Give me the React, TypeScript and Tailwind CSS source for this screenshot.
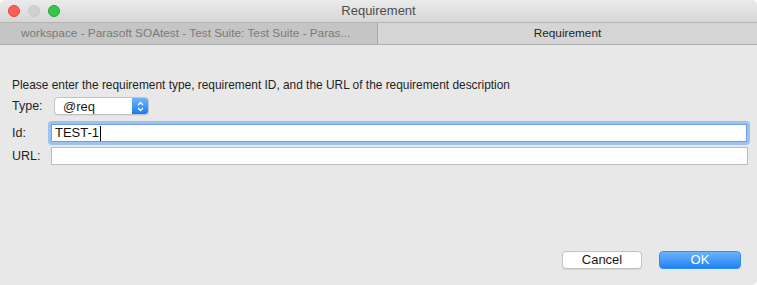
import React from 'react';

// macOS-style "Requirement" dialog sheet

function TrafficLights() {
  return (
    <div className="absolute left-[8px] top-[5px] flex gap-[8px]">
      <span className="h-[12px] w-[12px] rounded-full border border-[#e0443e] bg-[#fc605b]" />
      <span className="h-[12px] w-[12px] rounded-full border border-[#c8c8c8] bg-[#d0d0d0]" />
      <span className="h-[12px] w-[12px] rounded-full border border-[#1aab29] bg-[#34c84a]" />
    </div>
  );
}

function Row({ label, className, children }: { label: string; className?: string; children: React.ReactNode }) {
  return (
    <div className={`flex items-center ${className ?? ''}`}>
      <span className="w-[38px] shrink-0 text-[12.5px] leading-[18px] text-[#1f1f1f]">{label}</span>
      {children}
    </div>
  );
}

export default function App() {
  return (
    <div className="h-[285px] w-[757px] bg-white" style={{ fontFamily: '"Liberation Sans", Arial, sans-serif' }}>
      <div className="flex h-full flex-col overflow-hidden rounded-t-[5px] rounded-br-[5px] bg-[#e8e8e8]">
        {/* title bar */}
        <div className="relative flex h-[23px] shrink-0 items-center justify-center border-b border-[#b5b5b5] bg-gradient-to-b from-[#ebebeb] to-[#d6d6d6]">
          <TrafficLights />
          <span className="text-[13px] text-[#4c4c4c]">Requirement</span>
        </div>
        {/* tab bar */}
        <div className="flex h-[22px] shrink-0 border-b border-[#b0b0b0] text-[11.8px]">
          <div className="flex w-[378px] items-center border-r border-[#a8a8a8] bg-[#c5c5c5] pl-[21px] text-[#7a7a7a]">
            workspace - Parasoft SOAtest - Test Suite: Test Suite - Paras...
          </div>
          <div className="flex flex-1 items-center justify-center bg-[#d5d5d5] text-[#262626]">
            Requirement
          </div>
        </div>
        {/* body */}
        <div className="flex flex-1 flex-col pl-[12px] pr-[9px] pt-[31px] pb-[16px]">
          <p className="text-[11.9px] leading-[18px] text-[#1f1f1f]">
            Please enter the requirement type, requirement ID, and the URL of the requirement description
          </p>
          <div className="mt-[3px] flex flex-col">
            <Row label="Type:">
              <div className="ml-[4px] flex h-[18px] w-[95px] overflow-hidden rounded-[4px] border border-[#c4c4c4] bg-white shadow-[0_1px_0_rgba(0,0,0,0.06)]">
                <span className="flex-1 pl-[8px] text-[13px] leading-[17px] text-[#1a1a1a]">@req</span>
                <span className="flex w-[16px] items-center justify-center bg-gradient-to-b from-[#6cb3fa] to-[#0d7cf2]">
                  <svg width="7" height="11" viewBox="0 0 7 11" fill="none" stroke="white" strokeWidth="1.3">
                    <path d="M1 4 L3.5 1.5 L6 4" />
                    <path d="M1 7 L3.5 9.5 L6 7" />
                  </svg>
                </span>
              </div>
            </Row>
            <Row label="Id:" className="mt-[6px]">
              <div className="-ml-[2px] mr-[-2px] h-[24px] flex-1 rounded-[4px] border-[3px] border-[#9bc2f2]">
                <div className="flex h-full items-center border border-[#6f9fe0] bg-white pl-[3px] text-[13px] text-[#111]">
                  TEST-1<span className="ml-[1px] inline-block h-[15px] w-[1px] bg-black" />
                </div>
              </div>
            </Row>
            <Row label="URL:" className="mt-[2px]">
              <div className="ml-[1px] h-[18px] flex-1 border border-[#bdbdbd] bg-white" />
            </Row>
          </div>
          <div className="mt-auto flex justify-end gap-[17px] pr-[7px]">
            <button className="h-[18px] w-[80px] rounded-[4px] border border-[#c2c2c2] bg-white text-[13px] leading-[16px] text-[#1a1a1a] shadow-[0_1px_0_rgba(0,0,0,0.08)]">
              Cancel
            </button>
            <button className="h-[18px] w-[82px] rounded-[4px] border border-[#2d8ef5] bg-gradient-to-b from-[#6cb3fa] to-[#1a82f4] text-[13px] leading-[16px] text-white">
              OK
            </button>
          </div>
        </div>
      </div>
    </div>
  );
}
